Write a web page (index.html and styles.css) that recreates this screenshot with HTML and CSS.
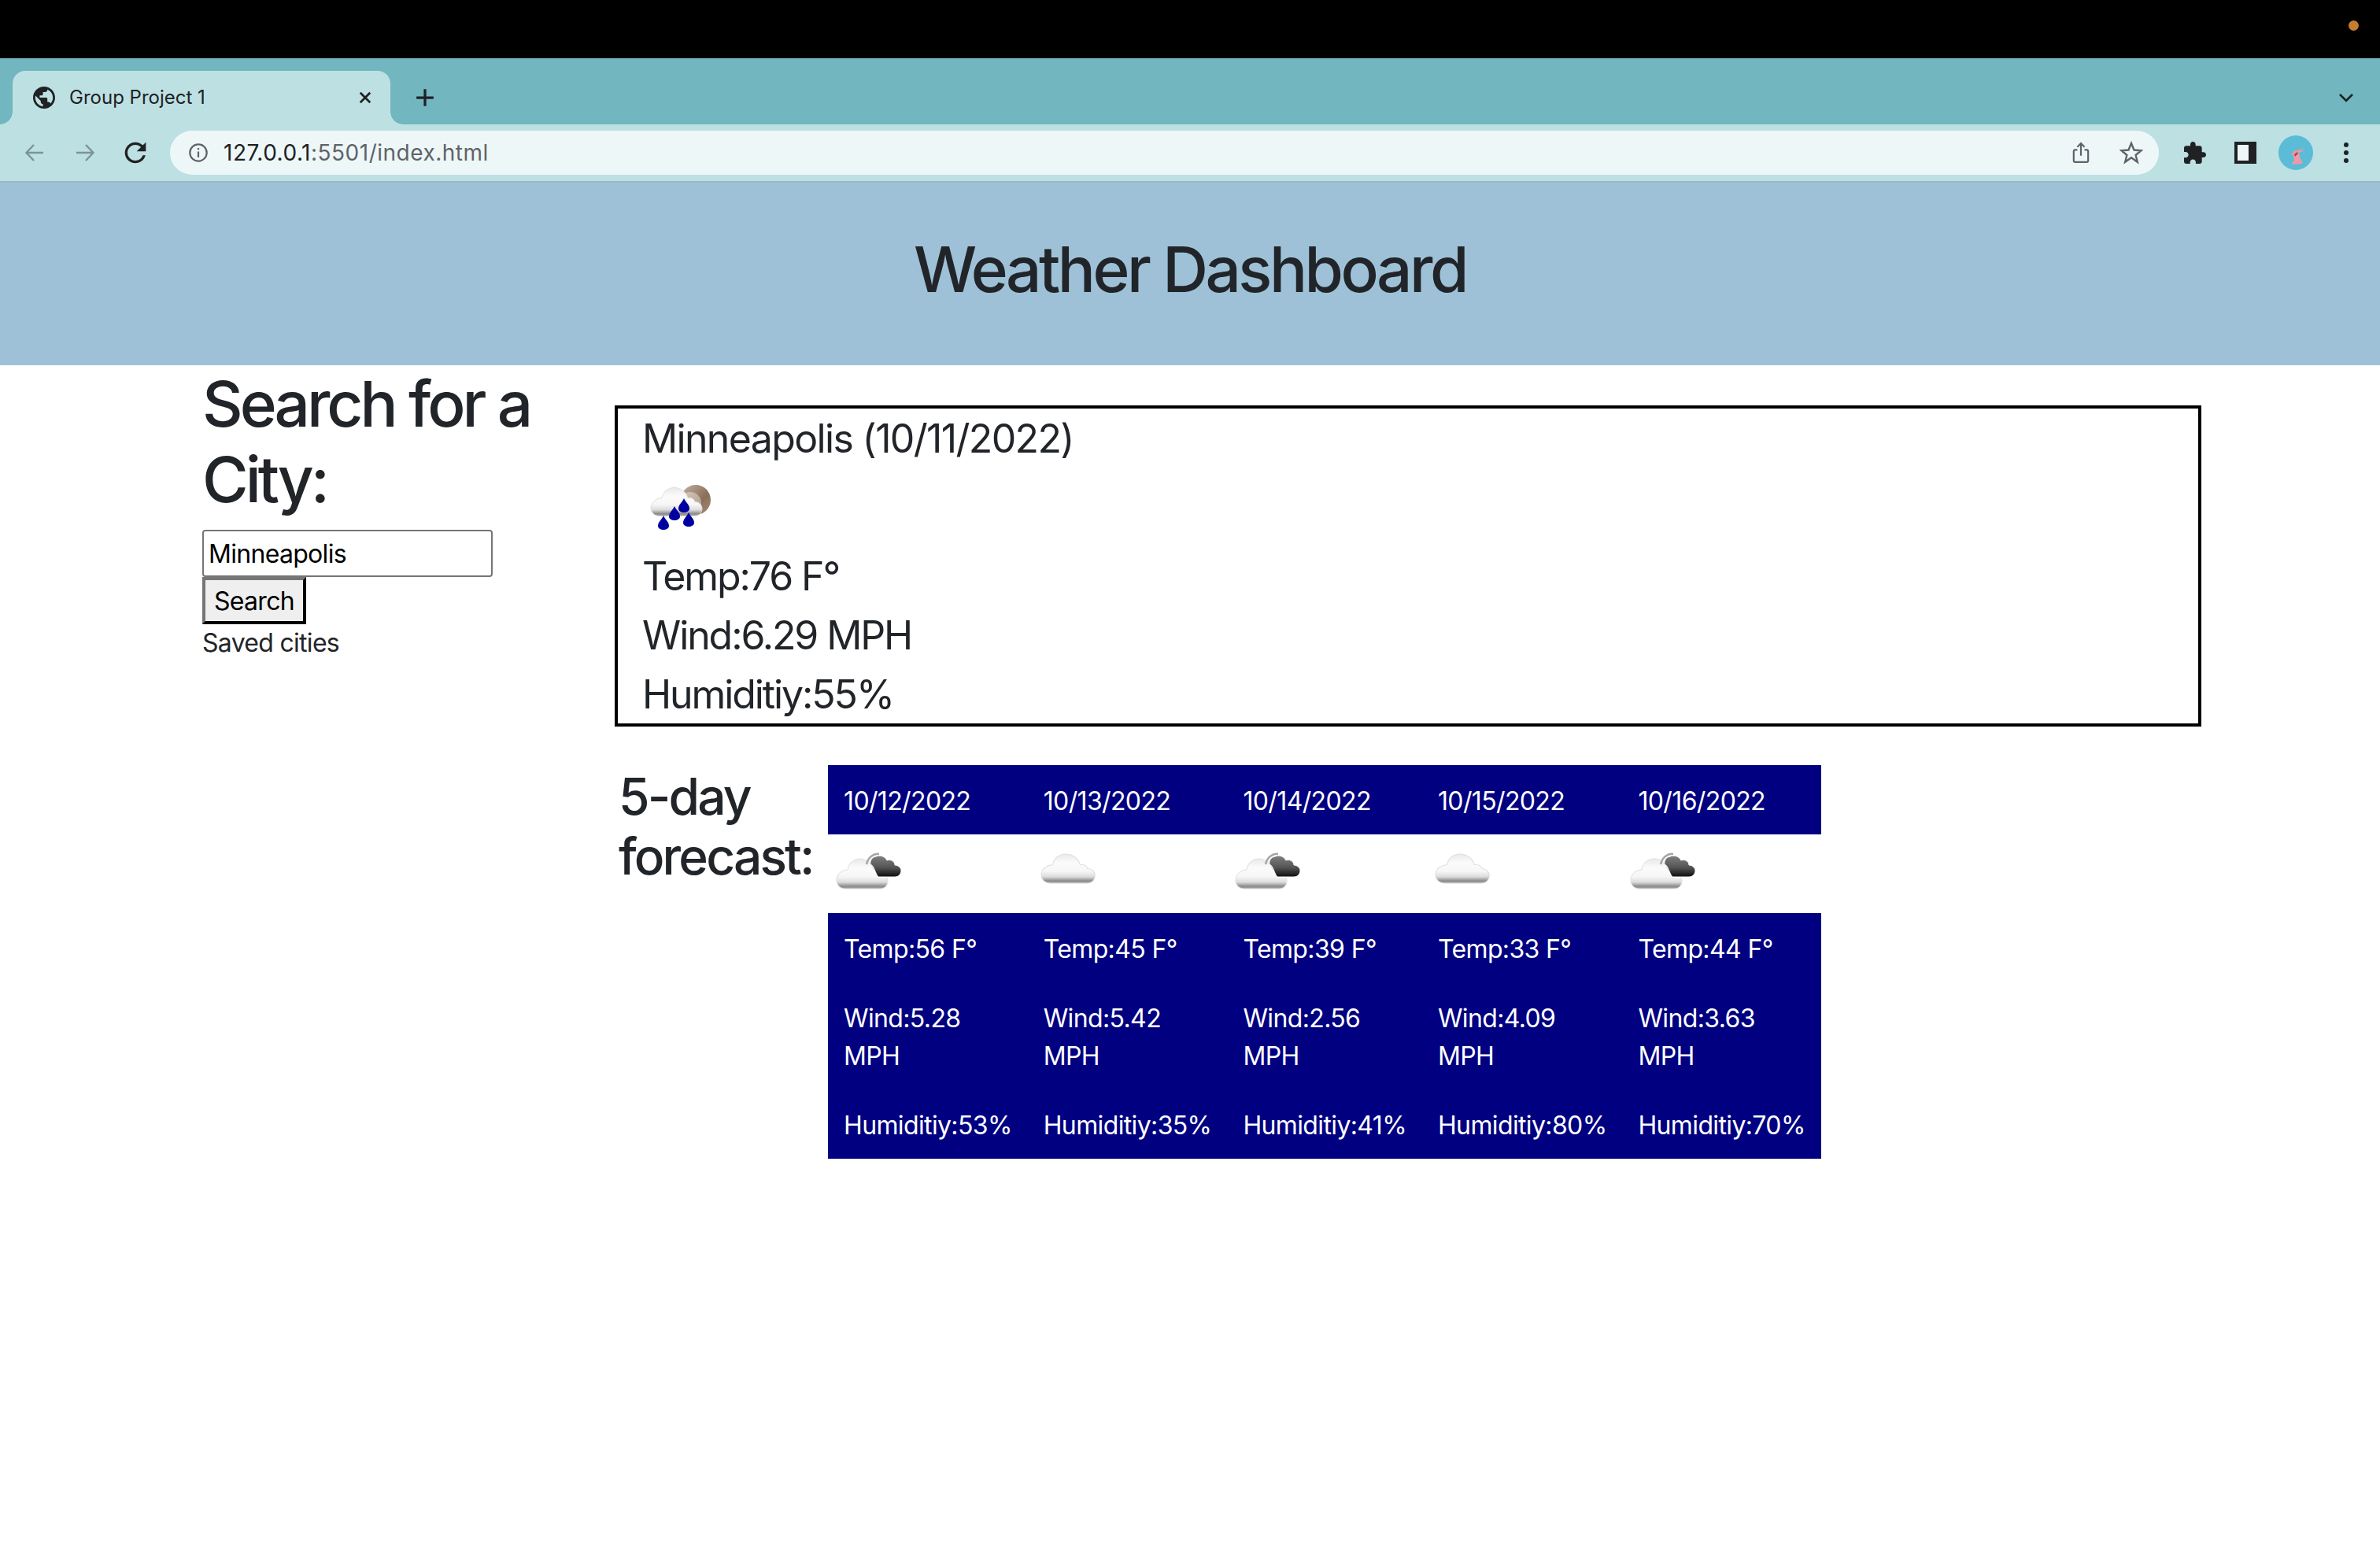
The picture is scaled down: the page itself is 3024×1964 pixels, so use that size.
FILE: index.html
```html
<!DOCTYPE html>
<html lang="en">
<head>
    <meta charset="UTF-8">
    <title>Group Project 1</title>
    <link rel="stylesheet" href="styles.css">
</head>
<body>
    <svg class="defs" width="0" height="0">
        <defs>
            <linearGradient id="white-cloud" x1="0" y1="0" x2="0" y2="1">
                <stop offset="0" stop-color="#e9e9e9"/>
                <stop offset="0.3" stop-color="#fbfbfb"/>
                <stop offset="0.6" stop-color="#f6f6f6"/>
                <stop offset="0.78" stop-color="#dcdcdc"/>
                <stop offset="0.92" stop-color="#8c8c8c"/>
                <stop offset="1" stop-color="#a8a8a8"/>
            </linearGradient>
            <linearGradient id="dark-cloud" x1="0" y1="0" x2="0" y2="1">
                <stop offset="0" stop-color="#808080"/>
                <stop offset="0.55" stop-color="#555555"/>
                <stop offset="1" stop-color="#0c0c0c"/>
            </linearGradient>
            <linearGradient id="moon" x1="0" y1="0" x2="1" y2="1">
                <stop offset="0" stop-color="#c4b3a3"/>
                <stop offset="0.6" stop-color="#8a6e58"/>
                <stop offset="1" stop-color="#a58d79"/>
            </linearGradient>
            <filter id="soft"><feGaussianBlur stdDeviation="0.6"/></filter>
            <path id="cloud-shape" stroke="#dedede" d="M22 69H66C73 69 76 64 76 59C76 54 72 50 67 50C66 46 62 44 58 45C56 37 49 31 41 31C32 31 26 37 25 45C17 45 11 51 11 58C11 64 15 69 22 69Z"/>
            <path id="drop-shape" d="M0 -10C2 -5 7 -2 7 3C7 6.500 3.500 8 0 8C-3.500 8 -7 6.500 -7 3C-7 -2 -2 -5 0 -10Z"/>
            <symbol id="broken-clouds" viewBox="0 0 100 100">
                <g filter="url(#soft)">
                    <use href="#cloud-shape" fill="url(#white-cloud)"/>
                    <path d="M49 38C51 29 58 24 65 25" fill="none" stroke="#a5a5a5" stroke-width="2.500"/>
                    <path d="M64 54H85C90 54 93 50 93 46C93 42 89 39 85 39C85 34 79 31 75 33C72 27 65 26 61 28C56 29 53 33 54 38C59 40 60 50 64 54Z" fill="url(#dark-cloud)" stroke="#ffffff"/>
                </g>
            </symbol>
            <symbol id="overcast" viewBox="0 0 100 100">
                <g filter="url(#soft)">
                    <use href="#cloud-shape" fill="url(#white-cloud)" transform="translate(5.500 -5) scale(1.050 0.970)"/>
                </g>
            </symbol>
            <symbol id="rain" viewBox="0 0 100 100">
                <g filter="url(#soft)">
                    <circle cx="68" cy="40" r="19" fill="url(#moon)"/>
                    <circle cx="61" cy="44" r="14" fill="#ffffff" opacity="0.4"/>
                    <use href="#cloud-shape" fill="url(#white-cloud)" transform="translate(0 -5) scale(1 0.950)"/>
                    <use href="#drop-shape" fill="#0000a0" x="27" y="70"/>
                    <use href="#drop-shape" fill="#0000a0" x="41" y="58"/>
                    <use href="#drop-shape" fill="#0000a0" x="53" y="48"/>
                    <use href="#drop-shape" fill="#0000a0" x="59" y="66"/>
                </g>
            </symbol>
        </defs>
    </svg>

    <div class="os-bar"><span class="os-dot"></span></div>

    <div class="tab-strip">
        <div class="tab">
            <svg class="favicon" viewBox="2 2 20 20"><path d="M12 2C6.480 2 2 6.480 2 12s4.480 10 10 10 10-4.480 10-10S17.520 2 12 2zm-1 17.930c-3.950-.490-7-3.850-7-7.930 0-.620.080-1.210.210-1.790L9 15v1c0 1.100.900 2 2 2v1.930zm6.900-2.540c-.260-.810-1-1.390-1.900-1.390h-1v-3c0-.550-.450-1-1-1H8v-2h2c.550 0 1-.450 1-1V7h2c1.100 0 2-.900 2-2v-.410c2.930 1.190 5 4.060 5 7.410 0 2.080-.800 3.970-2.100 5.390z"/></svg>
            <span class="tab-title">Group Project 1</span>
            <svg class="tab-close" viewBox="0 0 16 16"><path d="M3 3l10 10M13 3L3 13"/></svg>
        </div>
        <svg class="new-tab" viewBox="0 0 24 24"><path d="M12 2v20M2 12h20"/></svg>
        <svg class="tab-menu" viewBox="0 0 20 12"><path d="M2 2l8 8 8-8"/></svg>
    </div>

    <div class="toolbar">
        <svg class="nav-btn faded" viewBox="0 0 28 28"><path d="M25 14H4M13 4L3.500 14 13 24"/></svg>
        <svg class="nav-btn faded" viewBox="0 0 28 28"><path d="M3 14h21M15 4l9.500 10L15 24"/></svg>
        <svg class="nav-btn solid" viewBox="0 0 24 24"><path d="M17.650 6.350A7.958 7.958 0 0 0 12 4c-4.420 0-7.990 3.580-7.990 8s3.570 8 7.990 8c3.730 0 6.840-2.550 7.730-6h-2.080A5.990 5.990 0 0 1 12 18c-3.310 0-6-2.690-6-6s2.690-6 6-6c1.660 0 3.140.690 4.220 1.780L13 11h7V4l-2.350 2.350z"/></svg>
        <div class="omnibox">
            <svg class="info" viewBox="0 0 28 28"><circle cx="14" cy="14" r="11.500"/><path d="M14 12.500v8M14 7.500v2.500"/></svg>
            <span class="url"><span class="url-host">127.0.0.1</span>:5501/index.html</span>
            <svg class="omni-icon share" viewBox="0 0 24 30"><path d="M7 11H4a2 2 0 0 0-2 2v13a2 2 0 0 0 2 2h16a2 2 0 0 0 2-2V13a2 2 0 0 0-2-2h-3M12 19V2M7 7l5-5 5 5"/></svg>
            <svg class="omni-icon star" viewBox="0 0 30 30"><path d="M15 3l3.500 8.500 9 .700-6.900 5.800 2.200 8.800L15 21.200 7.200 26.800l2.200-8.800-6.900-5.800 9-.700z"/></svg>
        </div>
        <svg class="tool puzzle" viewBox="2 1 21 21"><path d="M20.500 11H19V7c0-1.100-.900-2-2-2h-4V3.500C13 2.120 11.880 1 10.500 1S8 2.120 8 3.500V5H4c-1.100 0-1.990.900-1.990 2v3.800H3.500c1.490 0 2.700 1.210 2.700 2.700s-1.210 2.700-2.700 2.700H2V20c0 1.100.900 2 2 2h3.800v-1.500c0-1.490 1.210-2.700 2.700-2.700 1.490 0 2.700 1.210 2.700 2.700V22H17c1.100 0 2-.900 2-2v-4h1.500c1.380 0 2.500-1.120 2.500-2.500S21.880 11 20.500 11z"/></svg>
        <div class="tool side-panel"></div>
        <svg class="avatar" viewBox="0 0 44 44">
            <circle cx="22" cy="22" r="22" fill="#5abcd6"/>
            <path d="M18 37l-1-2 3-3-1-6-3-3 3-1 1-3 4 .500 9-5-6 5 7-.500-8 3 1 5 2 5 2 2-2 2z" fill="#ec9aa5"/>
            <path d="M20 24l4-3 1 2-4 4z" fill="#b5404f"/>
        </svg>
        <svg class="tool dots" viewBox="0 0 8 28"><circle cx="4" cy="4" r="3"/><circle cx="4" cy="14" r="3"/><circle cx="4" cy="24" r="3"/></svg>
    </div>

    <header class="page-header">
        <h1>Weather Dashboard</h1>
    </header>

    <main class="content">
        <aside class="search">
            <h2>Search for a City:</h2>
            <input class="city-input" type="text" value="Minneapolis">
            <button class="search-btn">Search</button>
            <div class="saved">Saved cities</div>
        </aside>

        <section class="weather">
            <div class="today">
                <div class="today-line today-title">Minneapolis (10/11/2022)</div>
                <svg class="icon"><use href="#rain"/></svg>
                <div class="today-line">Temp:76 F°</div>
                <div class="today-line">Wind:6.29 MPH</div>
                <div class="today-line">Humiditiy:55%</div>
            </div>

            <div class="forecast">
                <h3>5-day forecast:</h3>
                <table class="forecast-table">
                    <tr class="dates">
                        <td>10/12/2022</td>
                        <td>10/13/2022</td>
                        <td>10/14/2022</td>
                        <td>10/15/2022</td>
                        <td>10/16/2022</td>
                    </tr>
                    <tr class="icons">
                        <td><svg class="icon"><use href="#broken-clouds"/></svg></td>
                        <td><svg class="icon"><use href="#overcast"/></svg></td>
                        <td><svg class="icon"><use href="#broken-clouds"/></svg></td>
                        <td><svg class="icon"><use href="#overcast"/></svg></td>
                        <td><svg class="icon"><use href="#broken-clouds"/></svg></td>
                    </tr>
                    <tr class="stats">
                        <td><p>Temp:56 F°</p><p>Wind:5.28 MPH</p><p>Humiditiy:53%</p></td>
                        <td><p>Temp:45 F°</p><p>Wind:5.42 MPH</p><p>Humiditiy:35%</p></td>
                        <td><p>Temp:39 F°</p><p>Wind:2.56 MPH</p><p>Humiditiy:41%</p></td>
                        <td><p>Temp:33 F°</p><p>Wind:4.09 MPH</p><p>Humiditiy:80%</p></td>
                        <td><p>Temp:44 F°</p><p>Wind:3.63 MPH</p><p>Humiditiy:70%</p></td>
                    </tr>
                </table>
            </div>
        </section>
    </main>
</body>
</html>
```

FILE: styles.css
```css
body {
    margin: 0;
    background-color: #fff;
    color: #212529;
    font-family: Inter, "Liberation Sans", sans-serif;
    font-size: 32px;
    line-height: 48px;
    letter-spacing: -0.7px;
}
.defs {
    display: block;
    height: 0;
}

/* browser chrome */
.os-bar {
    height: 74px;
    background-color: #000;
    display: flex;
    justify-content: flex-end;
    align-items: center;
    padding-right: 27px;
    padding-bottom: 10px;
    box-sizing: border-box;
}
.os-dot {
    width: 13px;
    height: 13px;
    border-radius: 50%;
    background-color: #c47e2e;
}
.tab-strip {
    height: 84px;
    background-color: #72b6bf;
    display: flex;
    align-items: flex-end;
    padding-left: 16px;
    box-sizing: border-box;
}
.tab {
    width: 480px;
    height: 68px;
    background-color: #bde0e2;
    border-radius: 16px 16px 0 0;
    display: flex;
    align-items: center;
    box-sizing: border-box;
    padding: 0 26px;
    position: relative;
}
.tab::before,
.tab::after {
    content: "";
    position: absolute;
    bottom: 0;
    width: 16px;
    height: 16px;
}
.tab::before {
    left: -16px;
    background: radial-gradient(circle at 0 0, #72b6bf 15.5px, #bde0e2 16px);
}
.tab::after {
    right: -16px;
    background: radial-gradient(circle at 100% 0, #72b6bf 15.5px, #bde0e2 16px);
}
.favicon {
    width: 28px;
    height: 28px;
    fill: #202124;
    flex: none;
}
.tab-title {
    margin-left: 18px;
    font-size: 24px;
    line-height: 32px;
    letter-spacing: 0;
    color: #202124;
    flex: 1;
}
.tab-close {
    width: 20px;
    height: 20px;
    fill: none;
    stroke: #202124;
    stroke-width: 2.2;
    margin-right: -4px;
}
.new-tab {
    width: 26px;
    height: 26px;
    fill: none;
    stroke: #202124;
    stroke-width: 3;
    margin-left: 31px;
    margin-bottom: 21px;
}
.tab-menu {
    width: 20px;
    height: 12px;
    fill: none;
    stroke: #202124;
    stroke-width: 2.6;
    margin-left: auto;
    margin-right: 33px;
    margin-bottom: 28px;
}
.toolbar {
    height: 74px;
    background-color: #bde0e2;
    border-bottom: 2px solid #9db6ba;
    box-sizing: border-box;
    display: flex;
    align-items: center;
    padding-left: 30px;
}
.nav-btn {
    flex: none;
}
.nav-btn.faded {
    width: 28px;
    height: 28px;
    margin-right: 36px;
    fill: none;
    stroke: #7b9497;
    stroke-width: 2.4;
}
.nav-btn.solid {
    width: 40px;
    height: 40px;
    margin-left: -6px;
    margin-right: 24px;
    fill: #202124;
}
.omnibox {
    width: 2527px;
    height: 56px;
    background-color: #eef7f8;
    border-radius: 28px;
    display: flex;
    align-items: center;
    padding: 0 20px 0 23px;
    box-sizing: border-box;
    flex: none;
}
.info {
    width: 26px;
    height: 26px;
    fill: none;
    stroke: #5f6368;
    stroke-width: 2.4;
    flex: none;
}
.url {
    margin-left: 19px;
    font-size: 28px;
    line-height: 32px;
    letter-spacing: 0.5px;
    color: #5f6368;
    flex: 1;
}
.url-host {
    color: #202124;
}
.omni-icon {
    fill: none;
    stroke: #5f6368;
    stroke-width: 2.4;
    flex: none;
}
.omni-icon.share {
    width: 22px;
    height: 30px;
    margin-right: 38px;
}
.omni-icon.star {
    width: 30px;
    height: 30px;
}
.tool {
    flex: none;
}
.puzzle {
    width: 28px;
    height: 28px;
    margin-left: 32px;
    fill: #202124;
}
.side-panel {
    width: 28px;
    height: 28px;
    margin-left: 36px;
    box-sizing: border-box;
    border: 4px solid #202124;
    border-right-width: 10px;
    background-color: #eef7f8;
}
.avatar {
    width: 44px;
    height: 44px;
    margin-left: 28px;
    flex: none;
}
.dots {
    width: 8px;
    height: 28px;
    margin-left: 38px;
    fill: #202124;
}

/* page */
.page-header {
    height: 232px;
    background-color: #9ec1d7;
    box-sizing: border-box;
    padding-top: 62px;
    text-align: center;
}
h1,
h2,
h3 {
    margin: 0;
    font-weight: 500;
}
h1,
h2 {
    font-size: 80px;
    line-height: 96px;
    letter-spacing: -3.5px;
}
h2 {
    letter-spacing: -4px;
}
.content {
    display: flex;
    padding-left: 257px;
}
.search {
    width: 524px;
    flex: none;
    box-sizing: border-box;
    padding-top: 1px;
    padding-right: 60px;
}
.search h2 {
    margin-bottom: 16px;
}
.city-input {
    display: block;
    width: 369px;
    height: 60px;
    box-sizing: border-box;
    border: 2px solid #767676;
    border-radius: 4px;
    padding: 0 6px;
    font-family: inherit;
    font-size: 32px;
    letter-spacing: -0.7px;
    color: #000;
}
.search-btn {
    display: block;
    width: 132px;
    height: 60px;
    box-sizing: border-box;
    border: 4px outset #767676;
    border-color: #767676 #3b3b3b #2b2b2b #767676;
    background-color: #efefef;
    padding: 0;
    font-family: inherit;
    font-size: 32px;
    letter-spacing: -0.7px;
    color: #000;
}
.weather {
    width: 2016px;
    flex: none;
    padding-top: 51px;
}
.today {
    border: 4px solid #000;
    padding: 1px 31px 0;
    height: 408px;
    box-sizing: border-box;
}
.today-line {
    font-size: 50px;
    line-height: 75px;
    letter-spacing: -2.1px;
}
.today-title {
    letter-spacing: -1.65px;
}
.icon {
    display: block;
    width: 100px;
    height: 100px;
}
.forecast {
    display: flex;
    margin-top: 49px;
}
h3 {
    width: 271px;
    flex: none;
    font-size: 64px;
    line-height: 76px;
    letter-spacing: -2.8px;
    padding-left: 5px;
    padding-top: 2px;
    box-sizing: border-box;
}
.forecast-table {
    border-collapse: collapse;
    width: min-content;
    letter-spacing: -0.63px;
}
.forecast-table td {
    padding: 22px 20px 18px;
    vertical-align: top;
}
.dates td,
.stats td {
    background-color: #000080;
    color: #fff;
}
.forecast-table .icons td {
    padding: 0;
    height: 100px;
}
.stats p {
    margin: 0 0 40px;
}
.stats p:last-child {
    margin-bottom: 0;
}
```
